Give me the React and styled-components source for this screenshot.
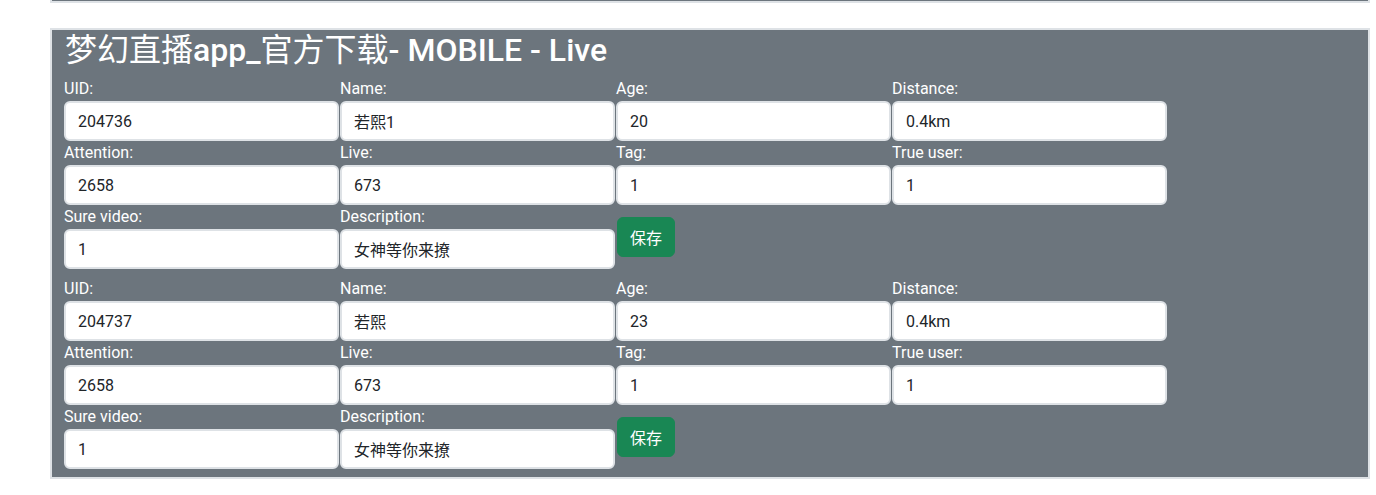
import React from 'react';
import styled, { createGlobalStyle } from 'styled-components';

const GlobalStyle = createGlobalStyle`
  body {
    margin:0;
    background:#fff;
    font-family:Roboto, "Noto Sans CJK SC", sans-serif;
    color:#212529;
  }
  * { box-sizing:border-box; }
`;

const Page = styled.div`
  width:1320px;
  margin-left:50px;
`;

const PrevPanel = styled.div`
  height:3px;
  background-color:#6c757d;
  border:2px solid #dee2e6;
  border-top:0;
  margin-bottom:25px;
`;

const Panel = styled.div`
  background-color:#6c757d;
  border:2px solid #dee2e6;
  padding:2px 12px 8px;
`;

const Title = styled.h3`
  margin:0 0 9px 1px;
  font-size:32px;
  line-height:36px;
  font-weight:500;
  color:#fff;
`;

const Cjk = styled.span`
  font-weight:400;
`;

const Block = styled.div`
  display:grid;
  grid-template-columns:repeat(4, 275px);
  column-gap:1px;
  margin-bottom:8px;
  &:last-child { margin-bottom:0; }
`;

const Field = styled.div`
  display:flex;
  flex-direction:column;
`;

const Label = styled.label`
  font-size:16px;
  line-height:24px;
  color:#fff;
`;

const Input = styled.input`
  width:100%;
  height:40px;
  padding:6px 12px;
  font-family:Roboto, "Noto Sans CJK SC", sans-serif;
  font-size:16px;
  line-height:24px;
  color:#212529;
  background:#fff;
  border:2px solid #dee2e6;
  border-radius:6px;
  outline:none;
`;

const SaveButton = styled.button`
  align-self:center;
  justify-self:start;
  height:40px;
  padding:6px 12px;
  margin-left:1px;
  font-family:Roboto, "Noto Sans CJK SC", sans-serif;
  font-size:16px;
  color:#fff;
  background-color:#198754;
  border:1px solid #198754;
  border-radius:6px;
`;

const users = [
  { uid: '204736', name: '若熙1', age: '20', distance: '0.4km', attention: '2658', live: '673', tag: '1', trueUser: '1', sureVideo: '1', desc: '女神等你来撩' },
  { uid: '204737', name: '若熙', age: '23', distance: '0.4km', attention: '2658', live: '673', tag: '1', trueUser: '1', sureVideo: '1', desc: '女神等你来撩' },
];

const Item = ({ label, value }) => (
  <Field>
    <Label>{label}</Label>
    <Input defaultValue={value} />
  </Field>
);

const App = () => {
  return (
    <>
      <GlobalStyle />
      <Page>
        <PrevPanel />
        <Panel>
          <Title><Cjk>梦幻直播</Cjk>app_<Cjk>官方下载</Cjk>- MOBILE - Live</Title>
          {users.map(u => (
            <Block key={u.uid}>
              <Item label="UID:" value={u.uid} />
              <Item label="Name:" value={u.name} />
              <Item label="Age:" value={u.age} />
              <Item label="Distance:" value={u.distance} />
              <Item label="Attention:" value={u.attention} />
              <Item label="Live:" value={u.live} />
              <Item label="Tag:" value={u.tag} />
              <Item label="True user:" value={u.trueUser} />
              <Item label="Sure video:" value={u.sureVideo} />
              <Item label="Description:" value={u.desc} />
              <SaveButton>保存</SaveButton>
            </Block>
          ))}
        </Panel>
      </Page>
    </>
  );
};

export default App;
